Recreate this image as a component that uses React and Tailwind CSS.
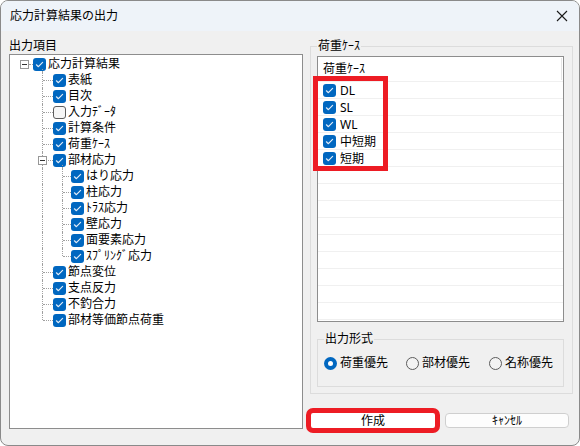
import React from 'react';

const FONT = { fontFamily: '"Noto Sans", "Noto Sans CJK JP", sans-serif' };

const CheckBox = ({ checked = true }) =>
    checked ? (
        <span className="flex h-[13px] w-[13px] shrink-0 items-center justify-center rounded-[3px] bg-[#0067c0]">
            <svg width="13" height="13" viewBox="0 0 13 13">
                <polyline points="3.4,6.8 5.4,8.7 9.6,4.4" fill="none" stroke="#dfeaf6" strokeWidth="1.2" strokeLinecap="round" strokeLinejoin="round" />
            </svg>
        </span>
    ) : (
        <span className="h-[13px] w-[13px] shrink-0 rounded-[3px] border border-[#5c5c5c] bg-[#f6f6f6]" />
    );

const Radio = ({ checked, label, width }) => (
    <div className={`flex items-center gap-[3px] ${width}`}>
        {checked ? (
            <span className="flex h-[13px] w-[13px] items-center justify-center rounded-full bg-[#0067c0]">
                <span className="h-[5px] w-[5px] rounded-full bg-white" />
            </span>
        ) : (
            <span className="h-[13px] w-[13px] rounded-full border border-[#5c5c5c] bg-[#f3f3f3]" />
        )}
        <span>{label}</span>
    </div>
);

const ExpandBox = ({ left }) => (
    <span className={`absolute top-[4px] ${left} flex h-[9px] w-[9px] items-center justify-center border border-[#979797] bg-white`}>
        <span className="h-px w-[5px] bg-[#333]" />
    </span>
);

// level 0 = root, 1 = child, 2 = grandchild
const treeItems = [
    { level: 0, label: '応力計算結果', expand: true },
    { level: 1, label: '表紙' },
    { level: 1, label: '目次' },
    { level: 1, label: '入力ﾃﾞｰﾀ', checked: false },
    { level: 1, label: '計算条件' },
    { level: 1, label: '荷重ｹｰｽ' },
    { level: 1, label: '部材応力', expand: true },
    { level: 2, label: 'はり応力' },
    { level: 2, label: '柱応力' },
    { level: 2, label: 'ﾄﾗｽ応力' },
    { level: 2, label: '壁応力' },
    { level: 2, label: '面要素応力' },
    { level: 2, label: 'ｽﾌﾟﾘﾝｸﾞ応力', lastChild: true },
    { level: 1, label: '節点変位' },
    { level: 1, label: '支点反力' },
    { level: 1, label: '不釣合力' },
    { level: 1, label: '部材等価節点荷重', last: true },
];

const dotV = 'absolute w-0 border-l border-dotted border-[#a0a0a0]';
const dotH = 'absolute top-[8px] h-0 border-t border-dotted border-[#a0a0a0]';

const TreeRow = ({ item }) => {
    const checked = item.checked !== false;
    const pad = item.level === 0 ? 'pl-[23px]' : item.level === 1 ? 'pl-[43px]' : 'pl-[61px]';
    return (
        <div className={`relative flex h-[16px] items-center gap-[2px] ${pad}`}>
            {item.level === 0 && (
                <>
                    <span className={`${dotV} left-[32px] top-[13px] h-[3px]`} />
                    <span className={`${dotH} left-[19px] w-[4px]`} />
                    <ExpandBox left="left-[10px]" />
                </>
            )}
            {item.level >= 1 && (
                <span className={`${dotV} left-[32px] top-0 ${item.last ? 'h-[8px]' : 'h-[16px]'}`} />
            )}
            {item.level === 1 && <span className={`${dotH} left-[33px] w-[10px]`} />}
            {item.level === 1 && item.expand && (
                <>
                    <span className={`${dotV} left-[52px] top-[13px] h-[3px]`} />
                    <ExpandBox left="left-[28px]" />
                </>
            )}
            {item.level === 2 && (
                <>
                    <span className={`${dotV} left-[52px] top-0 ${item.lastChild ? 'h-[8px]' : 'h-[16px]'}`} />
                    <span className={`${dotH} left-[53px] w-[8px]`} />
                </>
            )}
            <CheckBox checked={checked} />
            <span className="whitespace-nowrap leading-[16px]">{item.label}</span>
        </div>
    );
};

const loadCases = ['DL', 'SL', 'WL', '中短期', '短期'];

const App = () => {
    const emptyRows = Array.from({ length: 14 - loadCases.length });

    return (
        <div className="h-[446px] w-[580px] bg-white text-[12px] text-black" style={FONT}>
            <div className="flex h-full w-full flex-col overflow-hidden rounded-[8px] border border-[#8a8a8a] bg-[#f0f0f0]">
                {/* Title bar */}
                <div className="flex h-[30px] shrink-0 items-center justify-between bg-[#eef3f9] pl-[9px] pr-[11px]">
                    <span className="leading-[16px]">応力計算結果の出力</span>
                    <svg width="12" height="12" viewBox="0 0 12 12">
                        <path d="M1 1 L11 11 M11 1 L1 11" stroke="#1a1a1a" strokeWidth="1.1" />
                    </svg>
                </div>

                {/* Body */}
                <div className="flex gap-[7px] pl-[8px] pt-[8px]">
                    {/* Left: output items */}
                    <div className="flex w-[294px] flex-col">
                        <div className="h-[15px] leading-[14px]">出力項目</div>
                        <div className="h-[375px] border border-[#8d8d8d] bg-white pt-[1px]">
                            {treeItems.map((item) => (
                                <TreeRow key={item.label} item={item} />
                            ))}
                        </div>
                    </div>

                    {/* Right column */}
                    <div className="flex w-[263px] flex-col">
                        <fieldset className="border border-[#dcdcdc] pb-[6px] pl-[6px] pr-[8px]">
                            <legend className="px-[1px] leading-[14px]">荷重ｹｰｽ</legend>
                            <div className="relative mt-[3px] h-[266px] border border-[#8d8d8d] bg-white">
                                <div className="relative flex h-[25px] items-center border-b border-[#f0f0f0] pl-[5px]">
                                    <span>荷重ｹｰｽ</span>
                                    <span className="absolute right-[1px] top-[1px] h-[22px] w-px bg-[#e5e5e5]" />
                                </div>
                                {loadCases.map((name) => (
                                    <div key={name} className="flex h-[17px] items-center gap-[4px] border-b border-[#f0f0f0] pl-[5px] pt-[1px]">
                                        <CheckBox />
                                        <span className="leading-[16px]">{name}</span>
                                    </div>
                                ))}
                                {emptyRows.map((_, i) => (
                                    <div key={i} className="h-[17px] border-b border-[#f0f0f0]" />
                                ))}
                                {/* highlight */}
                                <div className="absolute left-[-5px] top-[19px] h-[95px] w-[75px] border-[5px] border-[#ed1c24]" />
                            </div>

                            <fieldset className="mt-[10px] border border-[#dcdcdc] pb-[15px] pl-[6px]">
                                <legend className="px-[1px] leading-[14px]">出力形式</legend>
                                <div className="mt-[9px] flex h-[16px] items-center">
                                    <Radio checked label="荷重優先" width="w-[82px]" />
                                    <Radio label="部材優先" width="w-[83px]" />
                                    <Radio label="名称優先" width="w-[70px]" />
                                </div>
                            </fieldset>
                        </fieldset>

                        <div className="mt-[19px] flex gap-[10px] pl-[1px]">
                            <button className="flex h-[15px] w-[124px] items-center justify-center rounded-[2px] bg-white leading-[14px] outline-[5px] outline-solid outline-[#ed1c24]">
                                作成
                            </button>
                            <button className="flex h-[15px] w-[124px] items-center justify-center rounded-[4px] border border-[#cfcfcf] bg-[#fdfdfd] leading-[14px]">
                                ｷｬﾝｾﾙ
                            </button>
                        </div>
                    </div>
                </div>
            </div>
        </div>
    );
};

export default App;
